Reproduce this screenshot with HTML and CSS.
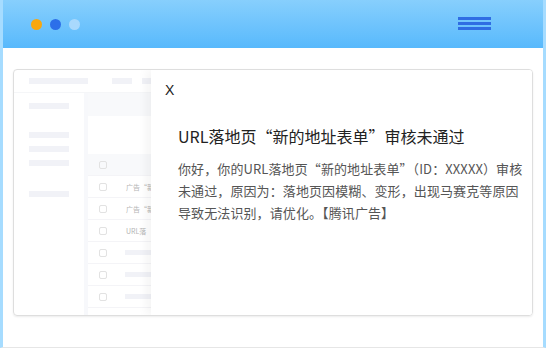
FILE: index.html
```html
<!DOCTYPE html>
<html lang="zh-CN">
<head>
  <meta charset="UTF-8">
  <title>审核通知</title>
  <link rel="stylesheet" href="styles.css">
</head>
<body>
  <div class="frame">
    <div class="topbar">
      <div class="dots">
        <span class="dot orange"></span>
        <span class="dot blue"></span>
        <span class="dot pale"></span>
      </div>
      <div class="menu">
        <span></span><span></span><span></span>
      </div>
    </div>

    <div class="content">
      <div class="card">
        <!-- blurred page behind the dialog -->
        <div class="skeleton">
          <div class="sk-head">
            <span class="bar w60"></span>
            <span class="bar w20 gap"></span>
            <span class="bar w20"></span>
          </div>
          <div class="sk-body">
            <div class="sk-side">
              <span class="bar w40 s1"></span>
              <span class="bar w40 s2"></span>
              <span class="bar w40"></span>
              <span class="bar w40"></span>
              <span class="bar w40 s3"></span>
            </div>
            <div class="sk-main">
              <div class="sk-band"></div>
              <div class="sk-space"></div>
              <div class="row head"><i class="box"></i></div>
              <div class="row"><i class="box"></i><span class="txt">广告“新</span></div>
              <div class="row"><i class="box"></i><span class="txt">广告“新</span></div>
              <div class="row"><i class="box"></i><span class="txt">URL落</span></div>
              <div class="row"><i class="box"></i><span class="bar w30"></span></div>
              <div class="row"><i class="box"></i><span class="bar w30"></span></div>
              <div class="row"><i class="box"></i><span class="bar w30"></span></div>
              <div class="row"><i class="box"></i></div>
            </div>
          </div>
        </div>

        <div class="panel">
          <div class="close">X</div>
          <h2 class="title">URL落地页“新的地址表单”审核未通过</h2>
          <p class="message">你好，你的URL落地页“新的地址表单”（ID：XXXXX）审核<br>未通过，原因为：落地页因模糊、变形，出现马赛克等原因<br>导致无法识别，请优化。【腾讯广告】</p>
        </div>
      </div>
    </div>
  </div>
</body>
</html>
```

FILE: styles.css
```css
body {
  margin: 0;
  background: #fff;
  font-family: "Noto Sans CJK SC", "Liberation Sans", sans-serif;
}
.frame {
  width: 540px;
  height: 347px;
  border-left: 3px solid #a6dcff;
  border-right: 3px solid #a6dcff;
  border-bottom: 1px solid #e6e6e6;
  overflow: hidden;
}
.topbar {
  height: 48px;
  background: linear-gradient(#87cffd, #58b9fc);
  display: flex;
  align-items: center;
  justify-content: space-between;
  padding: 0 52px 0 28px;
}
.dots {
  display: flex;
  gap: 8px;
}
.dot {
  width: 11px;
  height: 11px;
  border-radius: 50%;
}
.dot.orange { background: #f8a70e; }
.dot.blue { background: #2c6fe9; }
.dot.pale { background: #a9d9fd; }
.menu {
  display: flex;
  flex-direction: column;
  gap: 2px;
  margin-top: -1px;
}
.menu span {
  display: block;
  width: 33px;
  height: 3px;
  background: #2f6de3;
}
.content {
  padding: 21px 10px 0;
}
.card {
  position: relative;
  height: 245px;
  border: 1px solid #dedede;
  border-radius: 4px;
  box-shadow: 0 1px 2px rgba(0, 0, 0, 0.08);
  overflow: hidden;
}
.skeleton {
  opacity: 0.75;
}
.bar {
  display: block;
  height: 6px;
  background: #eceef4;
}
.w60 { width: 59px; }
.w40 { width: 40px; }
.w30 { width: 40px; }
.w20 { width: 20px; }
.sk-head {
  height: 22px;
  display: flex;
  align-items: center;
  padding-left: 15px;
  border-bottom: 1px solid #f2f3f6;
}
.sk-head .gap {
  margin: 0 10px 0 24px;
}
.sk-body {
  display: flex;
}
.sk-side {
  width: 74px;
  border-right: 4px solid #f4f6fa;
  padding: 10px 0 0 15px;
  box-sizing: border-box;
  display: flex;
  flex-direction: column;
  gap: 8px;
}
.sk-side .s2 { margin-top: 15px; }
.sk-side .s3 { margin-top: 17px; }
.sk-main {
  flex: 1;
}
.sk-band {
  height: 23px;
  background: #f6f7fa;
}
.sk-space {
  height: 38px;
}
.row {
  height: 21px;
  display: flex;
  align-items: center;
  padding-left: 11px;
  border-bottom: 1px solid #f0f1f4;
}
.row.head {
  background: #f6f7fa;
}
.box {
  width: 6px;
  height: 6px;
  border: 1px solid #d8d8d8;
  border-radius: 2px;
}
.row .txt {
  margin-left: 19px;
  font-size: 7px;
  color: #9a9a9a;
}
.row .bar {
  margin-left: 18px;
  height: 5px;
}
.panel {
  position: absolute;
  top: 0;
  right: 0;
  bottom: 0;
  width: 381px;
  background: #fff;
  box-shadow: -4px 0 10px rgba(0, 0, 0, 0.05);
  padding: 10px 0 0 14px;
  box-sizing: border-box;
}
.close {
  font-family: "Liberation Sans", sans-serif;
  font-size: 14px;
  line-height: 20px;
  color: #222;
}
.title {
  margin: 24px 0 0 13px;
  font-size: 16px;
  line-height: 24px;
  font-weight: normal;
  color: #222;
}
.message {
  margin: 10px 0 0 13px;
  width: 350px;
  font-size: 13px;
  letter-spacing: 0.1px;
  line-height: 22px;
  color: #555;
}
```
